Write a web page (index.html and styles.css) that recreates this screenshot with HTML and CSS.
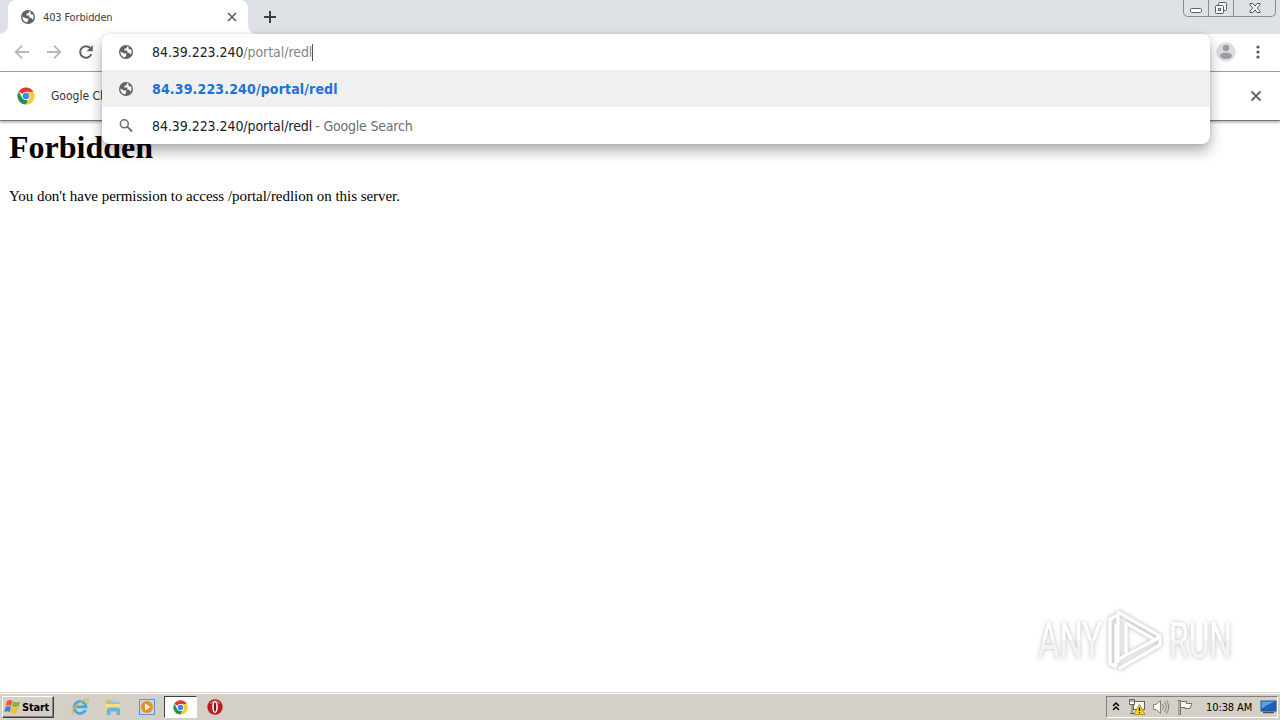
FILE: index.html
```html
<!DOCTYPE html>
<html lang="en">
  <head>
    <meta charset="UTF-8" />
    <title>403 Forbidden</title>
    <link rel="stylesheet" href="styles.css">
  </head>
  <body>
    <svg class="defs" width="0" height="0">
      <symbol id="globe" viewBox="0 0 16 16">
        <circle cx="8" cy="8" r="7" fill="#5f6368" />
        <path d="M2.4 7.6 L6.2 9.6 H8.2 V11.6 L7 13.6 Q2.4 12.6 2.4 7.6 M9 2.2 L8.6 4.2 L6.4 4.8 V6.6 H9.4 V8.8 H11.3 L12.4 10.8 Q14.4 8.4 13 5.2 L10.8 5.4 L10.4 2.6 Z" fill="#fff" />
      </symbol>
      <symbol id="chrome" viewBox="0 0 18 18">
        <path d="M9 9 L1.6 4.7 A8.5 8.5 0 0 1 16.4 4.7 Z" fill="#e23b2e" />
        <path d="M9 9 V4.7 H16.4 A8.5 8.5 0 0 1 9 17.5 L12.7 11 Z" fill="#fbc82f" />
        <path d="M9 17.5 A8.5 8.5 0 0 1 1.6 4.7 L5.3 11.1 L9 13 L11 13.5 Z" fill="#24944b" />
        <circle cx="9" cy="9" r="4.1" fill="#fff" />
        <circle cx="9" cy="9" r="3.3" fill="#4285ee" />
      </symbol>
      <linearGradient id="mark-fill" x1="0" y1="0" x2="0" y2="64" gradientUnits="userSpaceOnUse">
        <stop offset="0.5" stop-color="#fff" />
        <stop offset="0.5" stop-color="#f4f4f4" />
      </linearGradient>
    </svg>

    <div class="screen">
      <div class="tabstrip">
        <div class="tab">
          <svg class="icon" width="16" height="16"><use href="#globe" /></svg>
          <span class="tab-title">403 Forbidden</span>
          <svg width="10" height="10" viewBox="0 0 10 10"><path d="M1 1 L9 9 M9 1 L1 9" stroke="#5f6368" stroke-width="1.7" /></svg>
        </div>
        <svg class="new-tab" width="12" height="12" viewBox="0 0 12 12"><path d="M6 0 V12 M0 6 H12" stroke="#3c4043" stroke-width="2" /></svg>
        <div class="caption">
          <div class="caption-btn min">
            <svg width="14" height="14" viewBox="0 0 14 14"><rect x="1.5" y="7.5" width="11" height="4" rx="1" fill="#fff" stroke="#5a606b" /></svg>
          </div>
          <div class="caption-btn">
            <svg width="14" height="14" viewBox="0 0 14 14"><g fill="#f5f6f8" stroke="#565c68"><rect x="4.5" y="1.5" width="8" height="8" rx="1" /><rect x="1.5" y="4.5" width="8" height="8" rx="1" /><rect x="4.5" y="7.5" width="2" height="2" /></g></svg>
          </div>
          <div class="caption-btn close">
            <svg width="14" height="14" viewBox="0 0 14 14"><path d="M2 2.5 H5 L7 5 L9 2.5 H12 V4 L9.3 7 L12 10 V11.5 H9 L7 9 L5 11.5 H2 V10 L4.7 7 L2 4 Z" fill="#f5f6f8" stroke="#565c68" /></svg>
          </div>
        </div>
      </div>

      <div class="toolbar">
        <svg width="16" height="16" viewBox="0 0 16 16"><path d="M15 8 H2 M8 1.7 L1.7 8 L8 14.3" fill="none" stroke="#b6b8ba" stroke-width="1.8" /></svg>
        <svg width="16" height="16" viewBox="0 0 16 16"><path d="M1 8 H14 M8 1.7 L14.3 8 L8 14.3" fill="none" stroke="#b6b8ba" stroke-width="1.8" /></svg>
        <svg width="16" height="16" viewBox="0 0 16 16"><path d="M13.3 10.2 A5.8 5.8 0 1 1 12.2 4" fill="none" stroke="#5f6368" stroke-width="2" /><path d="M14.8 1 V7.2 H8.6 Z" fill="#5f6368" /></svg>
        <svg class="avatar" width="20" height="20" viewBox="0 0 20 20"><circle cx="10" cy="10" r="9.7" fill="#dcdddf" /><circle cx="10" cy="6" r="3.2" fill="#9b9da0" /><ellipse cx="10" cy="13.7" rx="6" ry="3.2" fill="#9b9da0" /></svg>
        <svg width="4" height="14" viewBox="0 0 4 14"><g fill="#55585c"><circle cx="2" cy="2" r="1.6" /><circle cx="2" cy="7" r="1.6" /><circle cx="2" cy="12" r="1.6" /></g></svg>
      </div>

      <div class="infobar">
        <svg width="18" height="18"><use href="#chrome" /></svg>
        <span class="infobar-text">Google Ch</span>
        <svg class="infobar-close" width="12" height="12" viewBox="0 0 12 12"><path d="M1.5 1.5 L10.5 10.5 M10.5 1.5 L1.5 10.5" stroke="#66696d" stroke-width="2" /></svg>
      </div>

      <div class="page">
        <h1>Forbidden</h1>
        <p>You don't have permission to access /portal/redlion on this server.</p>

        <svg class="watermark" width="204" height="68" viewBox="0 0 204 68">
          <text x="2" y="50" textLength="64" lengthAdjust="spacingAndGlyphs">ANY</text>
          <g transform="translate(70 0)" fill="none" stroke-linejoin="round" stroke-linecap="round">
            <path class="mark-edge" d="M10 8 L4 11 V56 L10 58 V17 M12 53 V4 L54 28 L49 32 L20 15 V47 L47 33 M14 60 L54 37 V31 M20 47 L12 52" />
            <path class="mark-line" d="M10 8 L4 11 V56 L10 58 V17 M12 53 V4 L54 28 L49 32 L20 15 V47 L47 33 M14 60 L54 37 V31 M20 47 L12 52" />
          </g>
          <text x="133" y="50" textLength="63" lengthAdjust="spacingAndGlyphs">RUN</text>
        </svg>
      </div>

      <div class="taskbar">
        <div class="start">
          <svg width="17" height="16" viewBox="0 0 17 16">
            <path d="M3 2 Q6 0 8.4 2 L7.2 7 Q4.5 5.5 1.7 7 Z" fill="#ee5b2b" />
            <path d="M9.2 2.4 Q12 4 16 2.4 L14.7 7.3 Q11.5 9 8 7.4 Z" fill="#7db843" />
            <path d="M1.5 8 Q4.2 6.5 7 8 L5.8 13 Q3.2 11.5 .3 13 Z" fill="#3b83cc" />
            <path d="M7.8 8.3 Q11 10 14.5 8.3 L13.2 13.3 Q9.5 15.5 6.5 13.4 Z" fill="#f5bd27" />
          </svg>
          <span>Start</span>
        </div>
        <div class="launch">
          <svg width="18" height="18" viewBox="0 0 18 18">
            <path d="M14.5 12 A6 6 0 1 1 15 8.8 H5" fill="none" stroke="#42a9e5" stroke-width="2.7" />
            <path d="M2 16 Q-1 13 6 7 Q14 0 17 2 Q18 3 16 6" fill="none" stroke="#e8b72f" stroke-width="1.3" />
          </svg>
        </div>
        <div class="launch">
          <svg width="18" height="18" viewBox="0 0 18 18">
            <path d="M2 2 H7 L8 4 H16 V14 H2 Z" fill="#e3bd4c" />
            <path d="M4 3.5 H14 V8 H4 Z" fill="#8cc5e4" />
            <path d="M2 6 H16 V13 H2 Z" fill="#f7df81" />
            <path d="M3 17 V11 Q3 9.5 5 9.5 H14 Q16 9.5 16 11 V17 H12.5 V13 H6.5 V17 Z" fill="#66b3de" />
          </svg>
        </div>
        <div class="launch">
          <svg width="18" height="18" viewBox="0 0 18 18">
            <rect x="1.5" y="1.5" width="15" height="15" fill="#b9dcf1" stroke="#5b98c6" />
            <circle cx="9" cy="9" r="6" fill="#f18b1d" />
            <path d="M7 5.5 L12.5 9 L7 12.5 Z" fill="#fff" />
          </svg>
        </div>
        <div class="launch active">
          <svg width="15" height="15"><use href="#chrome" /></svg>
        </div>
        <div class="launch">
          <svg width="18" height="18" viewBox="0 0 18 18">
            <circle cx="9" cy="9" r="7.7" fill="#b91d20" />
            <path d="M3 6 Q9 -1 15 6 Q9 4 3 6" fill="#e67774" />
            <ellipse cx="9" cy="9" rx="2.8" ry="6" fill="#fff" />
            <ellipse cx="9" cy="9" rx="1.2" ry="4.7" fill="#8d1013" />
          </svg>
        </div>

        <div class="tray">
          <svg width="8" height="10" viewBox="0 0 8 10"><path d="M1 4 L4 1 L7 4 M1 8 L4 5 L7 8" fill="none" stroke="#000" stroke-width="1.5" /></svg>
          <svg class="tray-net" width="18" height="18" viewBox="0 0 18 18">
            <rect x="5.5" y="3.5" width="11" height="8" fill="#f4f3f0" stroke="#66635f" />
            <path d="M1.5 1.5 H6.5 V6.5 H1.5 Z M4 7 V15 M2 15.5 H9 M3 1 V4 M5 1 V4" fill="#fff" stroke="#66635f" />
            <path d="M11.5 6.5 L17 16.5 H6 Z" fill="#f9d71c" stroke="#b99512" />
            <path d="M11.5 9.5 V13 M11.5 14 V15.3" stroke="#222" stroke-width="1.3" />
          </svg>
          <svg class="tray-sound" width="18" height="18" viewBox="0 0 18 18">
            <path d="M1.5 6.5 H4 L8.5 2.5 V15.5 L4 11.5 H1.5 Z" fill="#fff" stroke="#85827d" />
            <path d="M10.5 6 Q12.5 9 10.5 12 M12.5 4 Q16 9 12.5 14 M14.5 2.5 Q19 9 14.5 15.5" fill="none" stroke="#85827d" />
          </svg>
          <svg class="tray-flag" width="18" height="18" viewBox="0 0 18 18">
            <path d="M4.5 3.5 H10.5 V5.5 H16 L14 10.5 H9 V9.5 H4.5" fill="#fff" stroke="#716e69" />
            <path d="M2 2.5 H4.5 V16.5 H3 V3" fill="#fff" stroke="#716e69" />
          </svg>
          <span class="clock">10:38 AM</span>
          <svg class="tray-desktop" width="17" height="14" viewBox="0 0 17 14">
            <rect x="1" y="1" width="15" height="10" fill="#1f5fb8" stroke="#24508f" />
            <path d="M1.5 1.5 H15 Q8 4 1.5 9 Z" fill="#5e9ee4" />
            <path d="M3 12.5 H14" stroke="#48505b" stroke-width="1.5" />
          </svg>
        </div>
      </div>

      <div class="omnibox">
        <div class="omnibox-row input">
          <svg class="icon" width="16" height="16"><use href="#globe" /></svg>
          <span class="url">84.39.223.240<span class="path">/portal/redl</span></span>
          <span class="caret"></span>
        </div>
        <div class="omnibox-row selected">
          <svg class="icon" width="16" height="16"><use href="#globe" /></svg>
          <span class="url match">84.39.223.240/portal/redl</span>
        </div>
        <div class="omnibox-row">
          <svg class="icon" width="16" height="16" viewBox="0 0 16 16"><circle cx="6.3" cy="5.8" r="4" fill="none" stroke="#686c71" stroke-width="1.5" /><path d="M9.2 8.7 L14 13.5" stroke="#686c71" stroke-width="1.8" /></svg>
          <span class="url">84.39.223.240/portal/redl</span>
          <span class="hint">- Google Search</span>
        </div>
      </div>
    </div>
  </body>
</html>
```
FILE: styles.css
```css
* {
  box-sizing: border-box;
}

body {
  margin: 0;
  background: #fff;
  font-family: "DejaVu Sans Condensed", "DejaVu Sans", sans-serif;
  overflow: hidden;
}

svg {
  display: block;
  flex: none;
}

.defs {
  position: absolute;
}

.screen {
  position: relative;
  display: flex;
  flex-direction: column;
  width: 1280px;
  height: 720px;
}

/* tabs */
.tabstrip {
  display: flex;
  height: 34px;
  background: #dee1e6;
  padding-left: 8px;
}

.tab {
  position: relative;
  display: flex;
  align-items: center;
  width: 240px;
  padding: 0 11px 0 12px;
  background: #fff;
  border-radius: 8px 8px 0 0;
}

.tab::before,
.tab::after {
  content: "";
  position: absolute;
  bottom: 0;
  width: 8px;
  height: 8px;
}

.tab::before {
  left: -8px;
  background: radial-gradient(circle at 0 0, transparent 7.5px, #fff 8px);
}

.tab::after {
  right: -8px;
  background: radial-gradient(circle at 100% 0, transparent 7.5px, #fff 8px);
}

.tab-title {
  flex: 1;
  margin-left: 7px;
  font-size: 11px;
  letter-spacing: -0.15px;
  color: #3c4043;
}

.new-tab {
  margin: 11px 0 0 16px;
}

.caption {
  display: flex;
  width: 93px;
  height: 17px;
  margin-left: auto;
  margin-right: 4px;
  border: 1px solid #858b98;
  border-top: none;
  border-radius: 0 0 5px 5px;
}

.caption-btn {
  display: flex;
  align-items: center;
  justify-content: center;
  width: 25px;
  border-right: 1px solid #858b98;
}

.caption-btn.close {
  flex: 1;
  border-right: none;
}

/* toolbar */
.toolbar {
  display: flex;
  align-items: center;
  gap: 16px;
  height: 38px;
  padding: 0 20px 2px 14px;
  border-bottom: 1px solid #a9abae;
}

.toolbar .avatar {
  margin-left: auto;
  margin-right: 4px;
}

.infobar {
  display: flex;
  align-items: center;
  height: 49px;
  padding: 0 18px 0 17px;
  border-bottom: 1px solid #777;
  box-shadow: 0 1px 3px rgba(0, 0, 0, 0.4);
}

.infobar-text {
  margin-left: 16px;
  font-size: 12px;
  color: #333;
}

.infobar-close {
  margin-left: auto;
}

/* page */
.page {
  flex: 1;
  display: flex;
  flex-direction: column;
  padding: 8px 8px 0 9px;
  font-family: "Liberation Serif", serif;
  color: #000;
}

h1 {
  margin: 0;
  font-size: 32px;
  line-height: 36px;
}

p {
  margin: 22px 0 0;
  font-size: 15px;
  line-height: 18px;
  letter-spacing: -0.04px;
}

.watermark {
  margin: auto 32px 16px auto;
  filter: drop-shadow(0 0 2px rgba(0, 0, 0, 0.25));
  font-family: Roboto, sans-serif;
  font-size: 50px;
  font-weight: 400;
  overflow: visible;
}

.watermark text {
  fill: url(#mark-fill);
}

.mark-edge {
  stroke: #e2e2e2;
  stroke-width: 4;
}

.mark-line {
  stroke: #fff;
  stroke-width: 3;
}

/* omnibox */
.omnibox {
  position: absolute;
  top: 34px;
  left: 102px;
  width: 1108px;
  height: 110px;
  background: #fff;
  border-radius: 8px;
  box-shadow: 0 7px 14px rgba(0, 0, 0, 0.32), 0 0 3px rgba(0, 0, 0, 0.12);
  overflow: hidden;
}

.omnibox-row {
  display: flex;
  align-items: center;
  height: 37px;
  padding-left: 16px;
  font-size: 14px;
  color: #202124;
}

.omnibox-row.input {
  height: 36px;
}

.omnibox-row.selected {
  background: #f0f0f0;
}

.url {
  margin-left: 18px;
  letter-spacing: -0.06px;
  white-space: nowrap;
}

.path {
  color: #80868b;
}

.match {
  font-weight: 600;
  letter-spacing: 0.15px;
  color: #2170d9;
}

.caret {
  width: 1px;
  height: 17px;
  background: #555;
}

.hint {
  margin-left: 3px;
  letter-spacing: -0.2px;
  color: #6b6f74;
  white-space: nowrap;
}

/* taskbar */
.taskbar {
  display: flex;
  align-items: center;
  height: 28px;
  padding: 1px 2px 0 2px;
  background: #d4d0c8;
  border-top: 1px solid #d4d0c8;
  box-shadow: inset 0 1px #fff;
}

.start {
  display: flex;
  align-items: center;
  gap: 1px;
  width: 52px;
  height: 22px;
  margin-right: 9px;
  padding-left: 1px;
  border: 1px solid;
  border-color: #fff #404040 #404040 #fff;
  box-shadow: inset -1px -1px #808080;
  font-size: 11px;
  font-weight: 700;
  letter-spacing: -0.2px;
}

.launch {
  display: flex;
  align-items: center;
  justify-content: center;
  width: 33px;
  height: 22px;
  margin-right: 0.8px;
}

.launch.active {
  background: #fff;
  border: 1px solid;
  border-color: #404040 #fff #fff #404040;
}

.tray {
  display: flex;
  align-items: center;
  width: 172px;
  height: 22px;
  margin-left: auto;
  padding-left: 5px;
  border: 1px solid;
  border-color: #808080 #fff #fff #808080;
}

.tray-net {
  margin-left: 8px;
}

.tray-sound,
.tray-flag {
  margin-left: 6px;
}

.clock {
  margin-left: 12px;
  font-size: 11px;
  letter-spacing: -0.1px;
  white-space: nowrap;
}

.tray-desktop {
  margin-left: auto;
}
```
